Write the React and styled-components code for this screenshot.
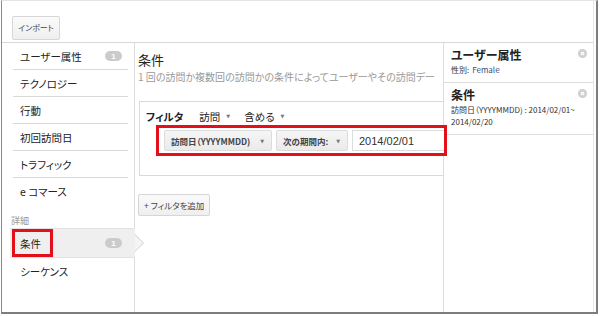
import React from 'react';
import styled, { createGlobalStyle } from 'styled-components';

const GlobalStyle = createGlobalStyle`
  html, body {
    margin: 0;
    padding: 0;
    background: #fff;
  }
  body {
    font-family: "Noto Sans CJK JP", "Liberation Sans", sans-serif;
    color: #333;
  }
`;

const sideItems = [
  { label: 'ユーザー属性', count: 1 },
  { label: 'テクノロジー' },
  { label: '行動' },
  { label: '初回訪問日' },
  { label: 'トラフィック' },
  { label: 'e コマース' },
];

const CloseIcon = () => (
  <svg width="9" height="9" viewBox="0 0 10 10">
    <circle cx="5" cy="5" r="5" fill="#cfcfcf" />
    <path d="M3.2 3.2 L6.8 6.8 M6.8 3.2 L3.2 6.8" stroke="#fff" strokeWidth="1.4" />
  </svg>
);

const App = () => {
  return (
    <>
      <GlobalStyle />
      <Page>
        <Frame>
          <Inner>
            <Header>
              <SmallButton>インポート</SmallButton>
            </Header>
            <Body>
              <Sidebar>
                {sideItems.map((item, index) => (
                  <SideItem key={index} $last={index === sideItems.length - 1}>
                    <span>{item.label}</span>
                    {item.count && <Badge>{item.count}</Badge>}
                  </SideItem>
                ))}
                <GroupLabel>詳細</GroupLabel>
                <SideItem $selected $last>
                  <Marked>条件</Marked>
                  <Badge>1</Badge>
                </SideItem>
                <SideItem $last>
                  <span>シーケンス</span>
                </SideItem>
              </Sidebar>
              <Main>
                <Title>条件</Title>
                <Description>1 回の訪問か複数回の訪問かの条件によってユーザーやその訪問デー</Description>
                <FilterBox>
                  <FilterHead>
                    <strong>フィルタ</strong>
                    <Dropdown>訪問 <Caret>▼</Caret></Dropdown>
                    <Dropdown>含める <Caret>▼</Caret></Dropdown>
                  </FilterHead>
                  <Annotation>
                    <Select $width={108}>
                      <span>訪問日（YYYYMMDD)</span>
                      <Caret>▼</Caret>
                    </Select>
                    <Select $width={72}>
                      <span>次の期間内:</span>
                      <Caret>▼</Caret>
                    </Select>
                    <DateInput>2014/02/01</DateInput>
                  </Annotation>
                </FilterBox>
                <AddButton>+ フィルタを追加</AddButton>
              </Main>
              <Summary>
                <SummaryCard>
                  <CardTitle>ユーザー属性</CardTitle>
                  <CardRow>
                    <span>性別:</span>
                    <Value>Female</Value>
                  </CardRow>
                  <CloseSpot><CloseIcon /></CloseSpot>
                </SummaryCard>
                <SummaryCard>
                  <CardTitle>条件</CardTitle>
                  <CardText>訪問日（YYYYMMDD) : 2014/02/01~<br />2014/02/20</CardText>
                  <CloseSpot><CloseIcon /></CloseSpot>
                </SummaryCard>
              </Summary>
            </Body>
          </Inner>
        </Frame>
      </Page>
    </>
  );
};

const Page = styled.div`
  width: 600px;
  height: 316px;
  overflow: hidden;
  box-sizing: border-box;
  padding-left: 1px;
`;

const Frame = styled.div`
  width: 597px;
  height: 314px;
  box-sizing: border-box;
  border-left: 1px solid #8a8a8a;
  border-right: 2px solid #7d7d7d;
  border-bottom: 2px solid #7d7d7d;
  border-top: 1px solid #e4e4e4;
  display: flex;
`;

const Inner = styled.div`
  flex: 1;
  margin-right: 2px;
  border-right: 1px solid #e6e6e6;
  display: flex;
  flex-direction: column;
  min-width: 0;
`;

const Header = styled.div`
  height: 42px;
  flex-shrink: 0;
  box-sizing: border-box;
  border-bottom: 1px solid #d8d8d8;
  padding: 11px 0 0 10px;
`;

const SmallButton = styled.div`
  display: inline-flex;
  align-items: center;
  justify-content: center;
  box-sizing: border-box;
  width: 48px;
  height: 24px;
  border: 1px solid #d6d6d6;
  border-radius: 2px;
  background: linear-gradient(#fafafa, #efefef);
  font-size: 8px;
  color: #444;
  font-feature-settings: "palt";
`;

const Body = styled.div`
  flex: 1;
  display: flex;
  min-height: 0;
`;

const Sidebar = styled.div`
  width: 133px;
  flex-shrink: 0;
  box-sizing: border-box;
  border-right: 1px solid #dcdcdc;
  padding-left: 8px;
  position: relative;
  z-index: 2;
`;

const SideItem = styled.div`
  position: relative;
  height: 26px;
  margin: ${p => (p.$selected ? '0 -1px 0 0' : '0 6px 0 3px')};
  padding: ${p => (p.$selected ? '0 13px 0 10px' : '0 6px 0 7px')};
  display: flex;
  align-items: center;
  justify-content: space-between;
  font-size: 10.5px;
  color: #222;
  font-feature-settings: "palt";
  border-bottom: ${p => (p.$last ? 'none' : '1px solid #d9d9d9')};
  background: ${p => (p.$selected ? '#efefef' : 'transparent')};
  ${p => p.$selected && `
    height: 28px;
    border-top: 1px solid #e2e2e2;
    border-bottom: 1px solid #e2e2e2;
    &::before, &::after {
      content: "";
      position: absolute;
      top: 50%;
      width: 0;
      height: 0;
      border-style: solid;
    }
    &::before {
      right: -9px;
      margin-top: -9px;
      border-width: 9px 0 9px 9px;
      border-color: transparent transparent transparent #cfcfcf;
    }
    &::after {
      right: -8px;
      margin-top: -8px;
      border-width: 8px 0 8px 8px;
      border-color: transparent transparent transparent #f4f4f4;
    }
  `}
`;

const Badge = styled.span`
  display: inline-flex;
  align-items: center;
  justify-content: center;
  width: 17px;
  height: 10px;
  border-radius: 5px;
  background: #cbcbcb;
  color: #fff;
  font-family: "Liberation Sans", sans-serif;
  font-weight: bold;
  font-size: 8px;
`;

const Marked = styled.span`
  margin-left: -8px;
  padding: 4px 9px 3px 5px;
  border: 3px solid #e3101c;
`;

const GroupLabel = styled.div`
  margin-top: 10px;
  height: 14px;
  font-size: 9px;
  color: #999;
  padding-left: 1px;
`;

const Main = styled.div`
  flex: 1;
  min-width: 0;
  padding: 8px 0 0 3px;
  position: relative;
`;

const Title = styled.div`
  font-size: 13px;
  color: #222;
  line-height: 18px;
`;

const Description = styled.div`
  font-size: 10px;
  color: #999;
  white-space: nowrap;
  overflow: hidden;
  line-height: 14px;
  margin-top: 1px;
  font-feature-settings: "palt";
`;

const FilterBox = styled.div`
  margin: 17px 0 0 1px;
  width: 330px;
  height: 75px;
  box-sizing: border-box;
  border: 1px solid #d9d9d9;
  padding: 6px 0 0 6px;
`;

const FilterHead = styled.div`
  display: flex;
  align-items: center;
  gap: 14px;
  font-size: 10.5px;
  color: #222;
  height: 16px;
  font-feature-settings: "palt";
  strong {
    font-weight: bold;
    margin-right: 2px;
  }
`;

const Dropdown = styled.span`
  display: inline-flex;
  align-items: center;
  gap: 6px;
`;

const Caret = styled.span`
  font-size: 5px;
  color: #777;
  font-family: "DejaVu Sans", sans-serif;
`;

const Annotation = styled.div`
  position: relative;
  z-index: 3;
  margin: 1px 0 0 10px;
  width: 291px;
  height: 31px;
  box-sizing: border-box;
  border: 3px solid #e3101c;
  padding: 2px 0 0 5px;
  display: flex;
  gap: 4px;
  background: #fff;
`;

const Select = styled.div`
  width: ${p => p.$width}px;
  height: 21px;
  box-sizing: border-box;
  border: 1px solid #dcdcdc;
  border-radius: 2px;
  background: linear-gradient(#f5f5f5, #ebebeb);
  display: flex;
  align-items: center;
  justify-content: space-between;
  padding: 0 7px 0 6px;
  font-size: 8.5px;
  font-weight: bold;
  color: #444;
  font-feature-settings: "palt";
`;

const DateInput = styled.div`
  flex: 1;
  height: 21px;
  box-sizing: border-box;
  border: 1px solid #dcdcdc;
  border-right: none;
  display: flex;
  align-items: center;
  padding-left: 6px;
  font-family: "Liberation Sans", sans-serif;
  font-size: 11px;
  color: #333;
`;

const AddButton = styled.div`
  display: inline-flex;
  align-items: center;
  box-sizing: border-box;
  height: 22px;
  margin-top: 18px;
  padding: 0 5px;
  border: 1px solid #d6d6d6;
  border-radius: 2px;
  background: linear-gradient(#fafafa, #efefef);
  font-size: 8.5px;
  color: #444;
  font-feature-settings: "palt";
`;

const Summary = styled.div`
  width: 149px;
  flex-shrink: 0;
  border-left: 1px solid #dcdcdc;
  background: #fff;
  position: relative;
  z-index: 1;
`;

const SummaryCard = styled.div`
  position: relative;
  border-bottom: 1px solid #dcdcdc;
  padding: 3px 8px 6px 7px;
`;

const CardTitle = styled.div`
  font-size: 12px;
  font-weight: bold;
  color: #222;
  line-height: 18px;
  font-feature-settings: "palt";
`;

const CardText = styled.div`
  font-size: 8px;
  color: #333;
  line-height: 12px;
  font-feature-settings: "palt";
`;

const CardRow = styled(CardText)`
  display: flex;
  gap: 3px;
`;

const Value = styled.span`
  color: #3b4a7a;
`;

const CloseSpot = styled.span`
  position: absolute;
  top: 6px;
  right: 6px;
  line-height: 0;
`;

export default App;
